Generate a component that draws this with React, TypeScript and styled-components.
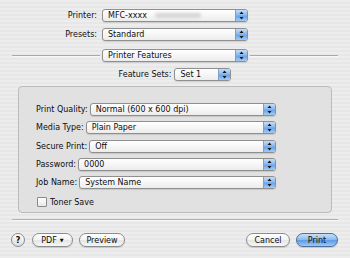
import React from 'react';
import styled, {createGlobalStyle} from 'styled-components';

const GlobalStyle = createGlobalStyle`
  html, body {
    margin: 0;
    padding: 0;
  }
  body {
    font-family: "DejaVu Sans", "Liberation Sans", sans-serif;
    font-size: 8px;
    color: #0d0d0d;
  }
`

function Stepper() {
  return (
    <Arrows>
      <svg width="5" height="9" viewBox="0 0 5 9">
        <path d="M2.5 0.5 L4.5 3 L0.5 3 Z" fill="#151515" />
        <path d="M0.5 6 L4.5 6 L2.5 8.5 Z" fill="#151515" />
      </svg>
    </Arrows>
  )
}

function Popup({value, width, blurred}: {value: string; width?: number; blurred?: boolean}) {
  return (
    <PopupBox $width={width}>
      <Value>
        {value}
        {blurred && <Smudge />}
      </Value>
      <Stepper />
    </PopupBox>
  )
}

const panelRows = [
  {label: 'Print Quality:', value: 'Normal (600 x 600 dpi)'},
  {label: 'Media Type:', value: 'Plain Paper'},
  {label: 'Secure Print:', value: 'Off'},
  {label: 'Password:', value: '0000'},
  {label: 'Job Name:', value: 'System Name'},
];

export default function App() {
  return (
    <>
      <GlobalStyle />
      <Sheet>
        <TopForm>
          <TopLabel>Printer:</TopLabel>
          <Popup value="MFC-xxxx" blurred />
          <TopLabel>Presets:</TopLabel>
          <Popup value="Standard" />
        </TopForm>

        <PaneRow>
          <Rule />
          <Popup value="Printer Features" width={146} />
          <Rule />
        </PaneRow>

        <SetRow>
          <span>Feature Sets:</span>
          <Popup value="Set 1" width={57} />
        </SetRow>

        <Panel>
          {panelRows.map(row => (
            <FieldRow key={row.label}>
              <FieldLabel>{row.label}</FieldLabel>
              <Popup value={row.value} />
            </FieldRow>
          ))}
          <CheckRow>
            <Checkbox />
            <span>Toner Save</span>
          </CheckRow>
        </Panel>

        <Divider />

        <ButtonBar>
          <Help>?</Help>
          <Button $width={41}>PDF <Caret>▼</Caret></Button>
          <Button $width={46}>Preview</Button>
          <Spacer />
          <Button $width={44}>Cancel</Button>
          <Button $width={42} $primary>Print</Button>
        </ButtonBar>
      </Sheet>
    </>
  )
}

const Sheet = styled.div`
  width: 350px;
  height: 258px;
  box-sizing: border-box;
  padding-top: 9px;
  display: flex;
  flex-direction: column;
  background: repeating-linear-gradient(180deg, #ededed 0, #ededed 2px, #e7e7e7 2px, #e7e7e7 4px);
  overflow: hidden;
`

const TopForm = styled.div`
  display: grid;
  grid-template-columns: 97px 146px;
  column-gap: 5px;
  row-gap: 6px;
  align-items: center;
`

const TopLabel = styled.span`
  text-align: right;
`

const PopupBox = styled.div<{$width?: number}>`
  display: flex;
  height: 13px;
  box-sizing: border-box;
  ${p => p.$width ? `width: ${p.$width}px;` : 'flex: 1;'}
  border: 1px solid #8f8f8f;
  border-radius: 3px;
  background: linear-gradient(180deg, #ffffff 0%, #f6f6f6 50%, #ececec 100%);
  box-shadow: 0 1px 1px rgba(0, 0, 0, 0.12);
  overflow: hidden;
`

const Value = styled.span`
  flex: 1;
  display: flex;
  align-items: center;
  padding-left: 5px;
  line-height: 11px;
  white-space: nowrap;
`

const Smudge = styled.span`
  display: inline-block;
  width: 46px;
  height: 5px;
  margin-left: 8px;
  border-radius: 3px;
  background: #d6d6d6;
  filter: blur(1.5px);
`

const Arrows = styled.span`
  width: 11px;
  display: flex;
  align-items: center;
  justify-content: center;
  border-left: 1px solid #7d9fcb;
  background: linear-gradient(180deg, #c4dcf7 0%, #8dbaee 45%, #6aa3e7 55%, #a3cbf4 100%);
`

const PaneRow = styled.div`
  display: flex;
  align-items: center;
  gap: 2px;
  margin: 8px 12px 0;
`

const Rule = styled.div`
  flex: 1;
  height: 1px;
  background: #a9a9a9;
  border-bottom: 1px solid #f7f7f7;
`

const SetRow = styled.div`
  display: flex;
  align-items: center;
  justify-content: center;
  gap: 3px;
  margin-top: 6px;
`

const Panel = styled.div`
  margin: 5px 18px 0;
  height: 127px;
  box-sizing: border-box;
  padding: 16px 55px 0 17px;
  display: flex;
  flex-direction: column;
  gap: 5.25px;
  border: 1px solid #bcbcbc;
  border-radius: 4px;
  background: #e1e1e1;
`

const FieldRow = styled.div`
  display: flex;
  align-items: center;
  gap: 2px;
`

const FieldLabel = styled.span`
  white-space: nowrap;
`

const CheckRow = styled.div`
  display: flex;
  align-items: center;
  gap: 3px;
  margin-top: 3px;
  padding-left: 1px;
`

const Checkbox = styled.span`
  width: 8px;
  height: 8px;
  border: 1px solid #8a8a8a;
  border-radius: 1px;
  background: linear-gradient(180deg, #ffffff, #e8e8e8);
`

const Divider = styled.div`
  margin: 6px 12px 0;
  height: 1px;
  background: #b0b0b0;
  border-bottom: 1px solid #f7f7f7;
`

const ButtonBar = styled.div`
  display: flex;
  align-items: center;
  gap: 6px;
  margin: 12px 12px 0 11px;
`

const Spacer = styled.div`
  flex: 1;
`

const Help = styled.span`
  width: 14px;
  height: 14px;
  box-sizing: border-box;
  border: 1px solid #8a8a8a;
  border-radius: 50%;
  display: flex;
  align-items: center;
  justify-content: center;
  font-weight: bold;
  font-size: 8px;
  background: linear-gradient(180deg, #ffffff, #dcdcdc);
  margin-right: 1px;
`

const Button = styled.span<{$width: number; $primary?: boolean}>`
  width: ${p => p.$width}px;
  height: 14px;
  box-sizing: border-box;
  display: flex;
  align-items: center;
  justify-content: center;
  border-radius: 7px;
  border: 1px solid ${p => p.$primary ? '#4b6f9c' : '#8c8c8c'};
  background: ${p => p.$primary
    ? 'linear-gradient(180deg, #c8e0fa 0%, #8ebdf0 45%, #5e9be5 55%, #9fcaf5 100%)'
    : 'linear-gradient(180deg, #ffffff 0%, #f4f4f4 45%, #e6e6e6 55%, #f6f6f6 100%)'};
  box-shadow: 0 1px 1px rgba(0, 0, 0, 0.15);
  white-space: nowrap;
`

const Caret = styled.span`
  font-size: 5px;
  margin-left: 3px;
`
